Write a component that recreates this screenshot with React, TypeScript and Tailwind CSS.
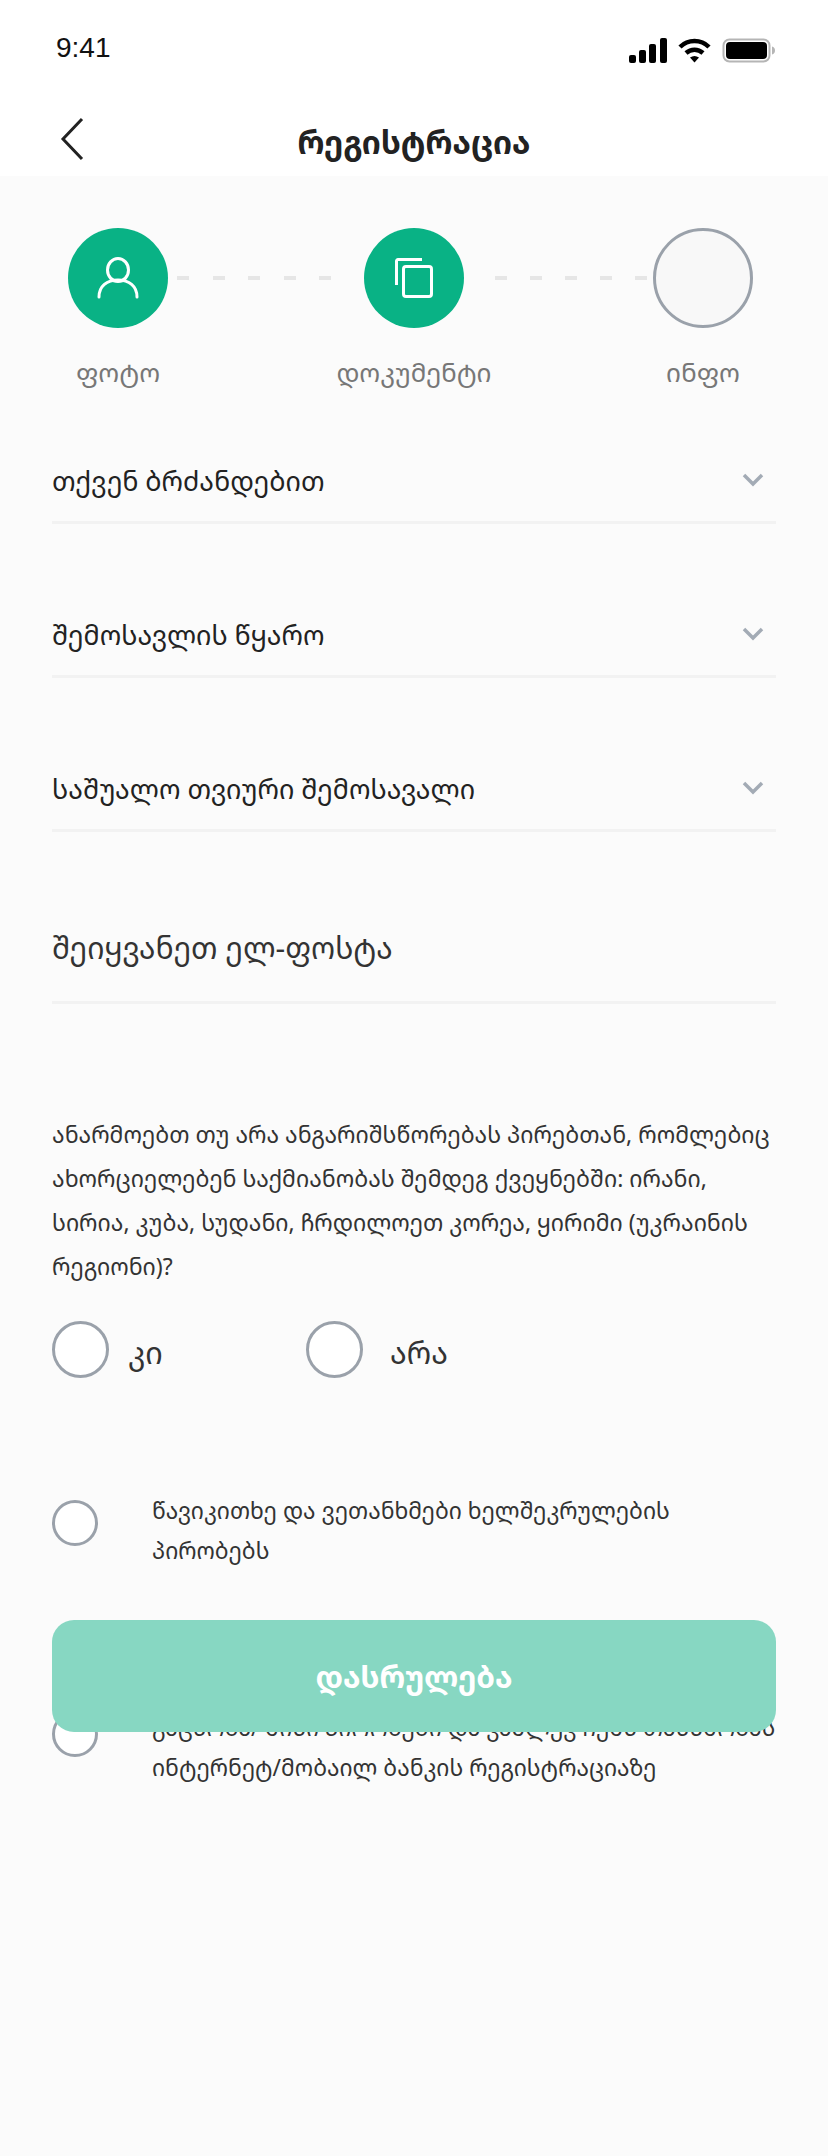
const font = "font-['Noto_Sans_Georgian','DejaVu_Sans',sans-serif]";

function Chevron() {
  return (
    <svg width="22" height="14" viewBox="0 0 22 14" fill="none" className="mr-[12px] mb-[3px]">
      <path d="M2 2l9 9 9-9" stroke="#a3abb5" strokeWidth="3.5" />
    </svg>
  );
}

function Select({ label }: { label: string }) {
  return (
    <div className="flex h-[66px] items-center justify-between border-b-[3px] border-[#f2f2f2] pb-[16px] text-[26.800px] text-[#222]">
      <span>{label}</span>
      <Chevron />
    </div>
  );
}

function Step({ label, active, icon }: { label: string; active?: boolean; icon?: React.ReactNode }) {
  return (
    <div className="flex w-[100px] flex-col items-center">
      <div
        className={
          active
            ? "flex h-[100px] w-[100px] items-center justify-center rounded-full bg-[#09b285]"
            : "h-[100px] w-[100px] rounded-full border-[3px] border-[#9aa1aa] bg-[#f8f8f8]"
        }
      >
        {icon}
      </div>
      <div className="mt-[28px] text-[26px] leading-[32px] whitespace-nowrap text-[#777]">{label}</div>
    </div>
  );
}

function Dash({ width }: { width: string }) {
  return (
    <div className={`${width} mb-[60px] flex justify-between`}>
      <div className="h-[4px] w-[12px] bg-[#e6e6e6]" />
      <div className="h-[4px] w-[12px] bg-[#e6e6e6]" />
      <div className="h-[4px] w-[12px] bg-[#e6e6e6]" />
      <div className="h-[4px] w-[12px] bg-[#e6e6e6]" />
      <div className="h-[4px] w-[12px] bg-[#e6e6e6]" />
    </div>
  );
}

export default function App() {
  return (
    <div className={`relative h-[2156px] w-[828px] overflow-hidden bg-[#fbfbfb] ${font}`}>
      <div className="h-[176px] bg-white">
        <div className="flex h-[96px] items-center justify-between pr-[52px] pl-[56px]">
          <span className="font-['Liberation_Sans',sans-serif] text-[28px] text-[#111]">9:41</span>
          <div className="mt-[5px] flex items-center gap-[11px]">
            <svg width="38" height="25" viewBox="0 0 38 25" fill="#000">
              <rect x="0" y="17" width="7" height="8" rx="2" />
              <rect x="10" y="12" width="7" height="13" rx="2" />
              <rect x="20" y="6" width="7" height="19" rx="2" />
              <rect x="31" y="0" width="7" height="25" rx="2" />
            </svg>
            <svg width="33" height="25" viewBox="0 0 33 25" fill="none" stroke="#000" strokeWidth="4.5">
              <path d="M2 9c8-8 21-8 29 0" />
              <path d="M8 15c5-4.500 12-4.500 17 0" />
              <path d="M12 19.500l4.500 5 4.500-5c-3-2-6-2-9 0z" fill="#000" stroke="none" />
            </svg>
            <svg width="54" height="25" viewBox="0 0 54 25" fill="none">
              <rect x="1.500" y="1.500" width="46" height="22" rx="6" stroke="#b5b5b5" strokeWidth="2" />
              <rect x="4" y="4" width="41" height="17" rx="4" fill="#000" />
              <path d="M50 8.500c2 .5 3 2 3 4s-1 3.500-3 4z" fill="#b5b5b5" />
            </svg>
          </div>
        </div>
        <div className="relative flex h-[80px] items-center justify-center pt-[12px]">
          <svg width="24" height="44" viewBox="0 0 24 44" fill="none" className="absolute top-[21px] left-[60px]" stroke="#222" strokeWidth="3">
            <path d="M22 2L3 22l19 20" />
          </svg>
          <span className="text-[31.500px] font-bold text-[#222]">რეგისტრაცია</span>
        </div>
      </div>

      <div className="px-[52px]">
        <div className="flex items-center pt-[52px] pr-[23px] pl-[16px]">
          <Step
            label="ფოტო"
            active
            icon={
              <svg width="42" height="42" viewBox="0 0 42 42" fill="none" stroke="#fff" strokeWidth="3" strokeLinecap="round">
                <ellipse cx="21" cy="13" rx="10.500" ry="11.500" />
                <path d="M2 40c0-11 8-17 19-17s19 6 19 17" />
              </svg>
            }
          />
          <div className="flex w-[196px] pl-[9px]">
            <Dash width="w-[154px]" />
          </div>
          <Step
            label="დოკუმენტი"
            active
            icon={
              <svg width="38" height="40" viewBox="0 0 38 40" fill="none" stroke="#fff" strokeWidth="3">
                <path d="M1.500 27V3a1.500 1.500 0 011.500-1.500H27" />
                <rect x="8.500" y="8.500" width="28" height="30" rx="2.500" />
              </svg>
            }
          />
          <div className="flex w-[189px] pl-[31px]">
            <Dash width="w-[152px]" />
          </div>
          <Step label="ინფო" />
        </div>

        <div className="mt-[70px] flex flex-col gap-[88px]">
          <Select label="თქვენ ბრძანდებით" />
          <Select label="შემოსავლის წყარო" />
          <Select label="საშუალო თვიური შემოსავალი" />
        </div>

        <div className="mt-[96px] h-[76px] border-b-[3px] border-[#f2f2f2] pb-[16px] text-[30px] leading-[40px] text-[#333]">
          შეიყვანეთ ელ-ფოსტა
        </div>

        <p className="mt-[108px] text-[23px] leading-[44px] whitespace-nowrap text-[#333]">
          ანარმოებთ თუ არა ანგარიშსწორებას პირებთან, რომლებიც
          <br />
          ახორციელებენ საქმიანობას შემდეგ ქვეყნებში: ირანი,
          <br />
          სირია, კუბა, სუდანი, ჩრდილოეთ კორეა, ყირიმი (უკრაინის
          <br />
          რეგიონი)?
        </p>

        <div className="mt-[33px] flex items-center">
          <div className="h-[57px] w-[57px] rounded-full border-[3.500px] border-[#9aa1aa] bg-white" />
          <span className="ml-[19px] w-[178px] pt-[6px] text-[30.500px] text-[#333]">კი</span>
          <div className="h-[57px] w-[57px] rounded-full border-[3.500px] border-[#9aa1aa] bg-white" />
          <span className="ml-[27px] pt-[6px] text-[30.500px] text-[#333]">არა</span>
        </div>

        <div className="mt-[113px] flex">
          <div className="mt-[9px] h-[46px] w-[46px] shrink-0 rounded-full border-[3.500px] border-[#9aa1aa] bg-white" />
          <p className="ml-[54px] text-[22.800px] leading-[40px] text-[#333]">
            წავიკითხე და ვეთანხმები ხელშეკრულების პირობებს
          </p>
        </div>

        <div className="mt-[137px] flex">
          <div className="mt-[3px] h-[46px] w-[46px] shrink-0 rounded-full border-[3.500px] border-[#9aa1aa] bg-white" />
          <p className="ml-[54px] text-[22.800px] leading-[40px] whitespace-nowrap text-[#333]">
            გაცნობა/ მისი პირობები და ვაძლევ ჩემს თანხმობას
            <br />
            ინტერნეტ/მობაილ ბანკის რეგისტრაციაზე
          </p>
        </div>
      </div>

      <div className="absolute top-[1620px] left-[52px] flex h-[112px] w-[724px] items-center justify-center rounded-[22px] bg-[#87d7c2] text-[30px] font-bold text-white">
        დასრულება
      </div>
    </div>
  );
}
